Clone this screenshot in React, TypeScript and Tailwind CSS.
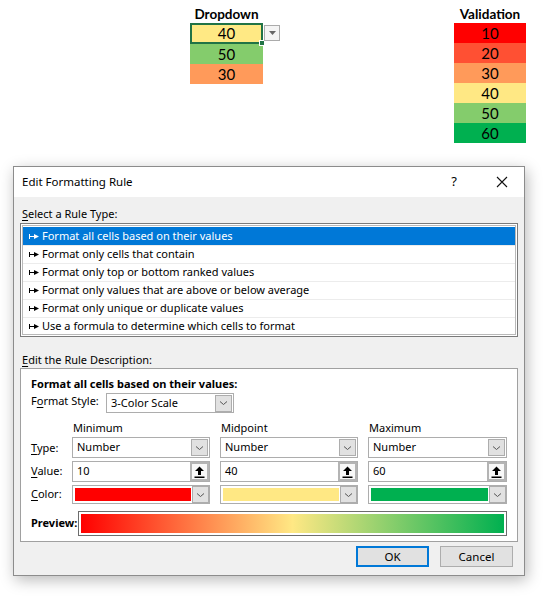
import React from "react";

const ui = { fontFamily: '"Noto Sans", "Open Sans", sans-serif' };
const cal = { fontFamily: 'Lato, "Liberation Sans", sans-serif' };

function Chevron() {
  return (
    <svg width="9" height="6" viewBox="0 0 9 6" fill="none">
      <path d="M1 1.5 L4.5 4.5 L8 1.5" stroke="#555" strokeWidth="1" />
    </svg>
  );
}

function DropBtn() {
  return (
    <div className="w-[17px] h-[17px] mr-[1px] bg-[#e1e1e1] border border-[#adadad] flex items-center justify-center shrink-0">
      <Chevron />
    </div>
  );
}

function Combo({ text, className = "" }: { text: string; className?: string }) {
  return (
    <div className={"flex items-center bg-white border border-[#adadad] h-[21px] pl-[4px] " + className}>
      <span className="flex-1 text-black">{text}</span>
      <DropBtn />
    </div>
  );
}

function UpIcon() {
  return (
    <svg width="11" height="12" viewBox="0 0 11 12">
      <path d="M5.5 0.5 L10 5 L7 5 L7 9 L4 9 L4 5 L1 5 Z" fill="#000" />
      <rect x="0.5" y="10.5" width="10" height="1.5" fill="#000" />
    </svg>
  );
}

function ValueBox({ v }: { v: string }) {
  return (
    <div className="flex items-center bg-white border border-[#adadad] h-[21px] pl-[4px]">
      <span className="flex-1 text-black">{v}</span>
      <div className="w-[19px] h-[19px] bg-[#e1e1e1] border-2 border-[#b4b4b4] flex items-center justify-center shrink-0">
        <div className="w-[15px] h-[15px] bg-[#f8f8f8] flex items-center justify-center">
          <UpIcon />
        </div>
      </div>
    </div>
  );
}

function ColorBox({ color }: { color: string }) {
  return (
    <div className="flex items-center bg-white border border-[#adadad] h-[19px] pl-[2px]">
      <div className="flex-1 h-[13px] mr-[1px]" style={{ background: color }} />
      <div className="w-[17px] h-[17px] bg-[#e1e1e1] border border-[#adadad] flex items-center justify-center shrink-0">
        <Chevron />
      </div>
    </div>
  );
}

function RuleArrow({ white }: { white: boolean }) {
  const c = white ? "#fff" : "#000";
  return (
    <svg width="10" height="7" viewBox="0 0 10 7" className="mr-[3px] shrink-0">
      <rect x="0" y="1" width="1" height="5" fill={c} />
      <rect x="0" y="3" width="6" height="1" fill={c} />
      <path d="M5 1 L10 3.5 L5 6 Z" fill={c} />
    </svg>
  );
}

const rules = [
  "Format all cells based on their values",
  "Format only cells that contain",
  "Format only top or bottom ranked values",
  "Format only values that are above or below average",
  "Format only unique or duplicate values",
  "Use a formula to determine which cells to format",
];

export default function App() {
  return (
    <div className="w-[549px] h-[602px] bg-white overflow-hidden" style={ui}>
      {/* Spreadsheet area */}
      <div className="h-[166px] flex items-start" style={cal}>
        <div className="ml-[190px] w-[73px] pt-[5px] flex flex-col">
          <div className="h-[18px] text-center font-bold text-[13.5px] leading-[18px] text-black">Dropdown</div>
          <div className="relative h-[21px] bg-[#ffe984] border-2 border-[#217346] flex items-center justify-center text-[15px] text-black">
            40
            <div className="absolute -right-[4px] -bottom-[4px] w-[6px] h-[6px] bg-[#217346] border border-white" />
            <div className="absolute -right-[19px] top-0 w-[16px] h-[16px] bg-[#f4f4f4] border border-[#ababab] flex items-center justify-center">
              <svg width="7" height="4" viewBox="0 0 7 4"><path d="M0 0 L7 0 L3.5 4 Z" fill="#666" /></svg>
            </div>
          </div>
          <div className="h-[20px] bg-[#84cc6c] flex items-center justify-center text-[15px] text-black">50</div>
          <div className="h-[20px] bg-[#ff9a5a] flex items-center justify-center text-[15px] text-black">30</div>
        </div>
        <div className="ml-auto mr-[23px] w-[72px] pt-[5px] flex flex-col">
          <div className="h-[18px] text-center font-bold text-[13.5px] leading-[18px] text-black">Validation</div>
          {[
            ["10", "#ff0000"],
            ["20", "#ff5033"],
            ["30", "#ff9a5a"],
            ["40", "#ffe884"],
            ["50", "#84cc6c"],
            ["60", "#00b050"],
          ].map(([t, c]) => (
            <div key={t} className="h-[20px] flex items-center justify-center text-[15px] text-black" style={{ background: c }}>
              {t}
            </div>
          ))}
        </div>
      </div>

      {/* Dialog */}
      <div className="ml-[13px] w-[512px] h-[410px] border border-[#8c8c8c] bg-[#f0f0f0] shadow-[2px_4px_14px_rgba(0,0,0,0.28)] flex flex-col text-[11px] text-black">
        <div className="h-[30px] bg-white flex items-center pl-[8px] shrink-0">
          <span className="text-[11.5px]">Edit Formatting Rule</span>
          <span className="ml-auto w-[12px] text-center text-[13px] mr-[36px]">?</span>
          <svg width="12" height="12" viewBox="0 0 12 12" className="mr-[16px]">
            <path d="M1 1 L11 11 M11 1 L1 11" stroke="#111" strokeWidth="1.1" />
          </svg>
        </div>
        <div className="flex-1 px-[6px] flex flex-col">
          <div className="mt-[9px] h-[16px] leading-[16px] pl-[2px]">
            <span className="underline underline-offset-2">S</span>elect a Rule Type:
          </div>
          <div className="mt-[1px] h-[114px] border border-[#7a7a7a] bg-white p-[1px]">
            <div className="h-full border border-[#b9b9b9] pt-[1px]">
              {rules.map((r, i) => (
                <div
                  key={r}
                  className={
                    "h-[18px] flex items-center pl-[6px] " +
                    (i === 0 ? "bg-[#0078d7] text-white" : "border-t border-[#ececec] text-black")
                  }
                >
                  <RuleArrow white={i === 0} />
                  <span>{r}</span>
                </div>
              ))}
            </div>
          </div>
          <div className="mt-[15px] h-[16px] leading-[16px] pl-[2px]">
            <span className="underline underline-offset-2">E</span>dit the Rule Description:
          </div>
          <div className="h-[174px] border border-[#a0a0a0] bg-white pl-[10px] pr-[9px] flex flex-col">
            <div className="mt-[7px] font-bold leading-[16px]">Format all cells based on their values:</div>
            <div className="flex items-start mt-[1px]">
              <div className="w-[75px] leading-[16px]">
                F<span className="underline underline-offset-2">o</span>rmat Style:
              </div>
              <Combo text="3-Color Scale" className="w-[128px] !h-[20px]" />
            </div>
            <div className="grid grid-cols-[31px_138px_138px_139px] gap-x-[10px] mt-[7px]">
              <div />
              <div className="pl-[1px] h-[16px] leading-[16px]">Minimum</div>
              <div className="pl-[1px] h-[16px] leading-[16px]">Midpoint</div>
              <div className="pl-[1px] h-[16px] leading-[16px]">Maximum</div>
            </div>
            <div className="grid grid-cols-[31px_138px_138px_139px] gap-x-[10px] gap-y-[3px] mt-[1px] items-center">
              <div className="pt-[2px]"><span className="underline underline-offset-2">T</span>ype:</div>
              <Combo text="Number" />
              <Combo text="Number" />
              <Combo text="Number" />
              <div><span className="underline underline-offset-2">V</span>alue:</div>
              <ValueBox v="10" />
              <ValueBox v="40" />
              <ValueBox v="60" />
              <div><span className="underline underline-offset-2">C</span>olor:</div>
              <ColorBox color="#ff0000" />
              <ColorBox color="#ffe884" />
              <ColorBox color="#00b050" />
            </div>
            <div className="flex items-center mt-[7px]">
              <div className="w-[47px] font-bold">Preview:</div>
              <div className="w-[429px] h-[25px] border border-[#6d6d6d] p-[2px] bg-white">
                <div className="w-full h-full bg-[linear-gradient(to_right,#ff0000,#ffe884_50%,#00b050)]" />
              </div>
            </div>
          </div>
          <div className="flex justify-end mt-[4px] pr-[5px] gap-[11px]">
            <button className="w-[73px] h-[21px] bg-[#e1e1e1] border-2 border-[#0078d7] text-[11.5px] leading-none">OK</button>
            <button className="w-[73px] h-[21px] bg-[#e1e1e1] border border-[#adadad] text-[11.5px] leading-none">Cancel</button>
          </div>
        </div>
      </div>
    </div>
  );
}
